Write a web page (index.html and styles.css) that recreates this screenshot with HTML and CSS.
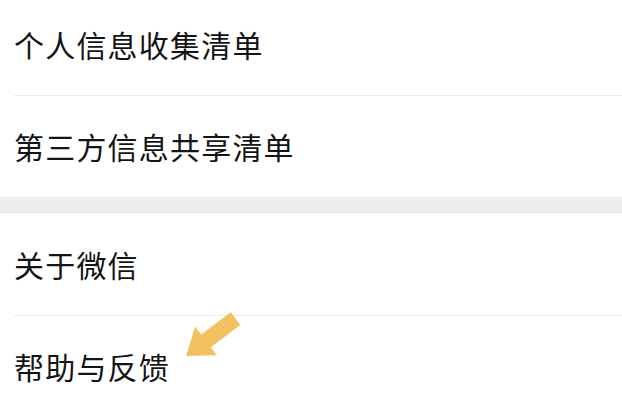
FILE: index.html
```html
<!DOCTYPE html>
<html lang="zh-CN">
<head>
<meta charset="utf-8">
<link rel="stylesheet" href="styles.css">
</head>
<body>
<div class="page">
  <div class="group first">
    <div class="row"><span class="label">个人信息收集清单</span></div>
    <div class="row"><span class="label">第三方信息共享清单</span></div>
  </div>
  <div class="band"></div>
  <div class="group">
    <div class="row"><span class="label">关于微信</span></div>
    <div class="row"><span class="label">帮助与反馈</span></div>
  </div>
  <svg class="arrow" width="622" height="409" viewBox="0 0 622 409">
    <polygon fill="#f4c160" points="186,356 195.1,326.6 201.1,334.5 230.7,312.2 240.3,325 210.8,347.3 216.8,355.3"/>
  </svg>
</div>
</body>
</html>
```
FILE: styles.css
```css
html, body {
  margin: 0;
  padding: 0;
  background: #ffffff;
  overflow: hidden;
}
.page {
  position: relative;
  width: 622px;
  height: 409px;
  overflow: hidden;
  font-family: "Noto Sans CJK SC", "Noto Sans", sans-serif;
  color: #141414;
}
.group {
  background: #ffffff;
}
.group.first {
  margin-top: -7px;
}
.row {
  height: 102px;
  display: flex;
  align-items: center;
  padding-left: 14px;
  position: relative;
}
.row + .row::before {
  content: "";
  position: absolute;
  top: 0;
  left: 14px;
  right: 0;
  height: 1px;
  background: #ececec;
}
.label {
  font-size: 30px;
  letter-spacing: 1.2px;
  line-height: 1;
}
.band {
  height: 15px;
  background: #ededed;
  border-bottom: 1px solid #e4e4e4;
}
.arrow {
  position: absolute;
  left: 0;
  top: 0;
}
```
